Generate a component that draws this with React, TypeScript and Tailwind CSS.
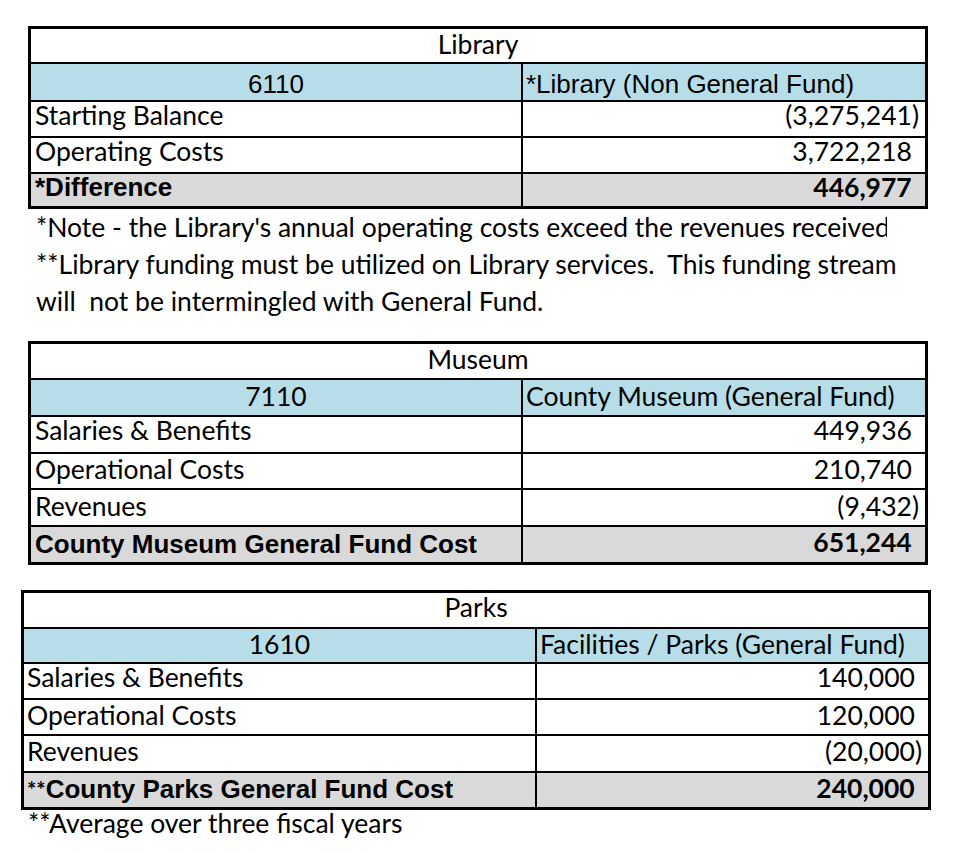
const calibri = "font-['Lato','Noto_Sans',sans-serif] text-[26.5px] leading-none"
const arial = "font-['Liberation_Sans',Arial,sans-serif] text-[26px] leading-none"

type Row = {
  label: string
  value: string
  h: string
  pt: string
}

type Budget = {
  title: string
  titleRow: string
  code: string
  fund: string
  fundFont: string
  fundRow: string
  rows: Row[]
  total: Row & { numPt: string; stars?: boolean }
  width: string
  cols: string
  labelPad: string
}

const library: Budget = {
  title: 'Library',
  titleRow: 'h-[33px] pt-[2px]',
  code: '6110',
  fund: '*Library (Non General Fund)',
  fundFont: arial,
  fundRow: 'h-[36px] pt-[7px]',
  rows: [
    { label: 'Starting Balance', value: '(3,275,241)', h: 'h-[34px]', pt: 'pt-0' },
    { label: 'Operating Costs', value: '3,722,218', h: 'h-[34px]', pt: 'pt-0' },
  ],
  total: { label: '*Difference', value: '446,977', h: 'h-[32px]', pt: 'pt-0', numPt: 'pt-0' },
  width: 'w-[900px] ml-[28px]',
  cols: 'grid-cols-[490px_1fr]',
  labelPad: 'pl-[4px]',
}

const museum: Budget = {
  title: 'Museum',
  titleRow: 'h-[34px] pt-[2px]',
  code: '7110',
  fund: 'County Museum (General Fund)',
  fundFont: calibri,
  fundRow: 'h-[35px] pt-[3px]',
  rows: [
    { label: 'Salaries & Benefits', value: '449,936', h: 'h-[35px]', pt: 'pt-0' },
    { label: 'Operational Costs', value: '210,740', h: 'h-[34px]', pt: 'pt-[2px]' },
    { label: 'Revenues', value: '(9,432)', h: 'h-[35px]', pt: 'pt-[3px]' },
  ],
  total: {
    label: 'County Museum General Fund Cost',
    value: '651,244',
    h: 'h-[35px]',
    pt: 'pt-[4px]',
    numPt: 'pt-[2px]',
  },
  width: 'w-[900px] ml-[28px]',
  cols: 'grid-cols-[490px_1fr]',
  labelPad: 'pl-[4px]',
}

const parks: Budget = {
  title: 'Parks',
  titleRow: 'h-[34px] pt-[1px]',
  code: '1610',
  fund: 'Facilities / Parks (General Fund)',
  fundFont: calibri,
  fundRow: 'h-[33px] pt-[2px]',
  rows: [
    { label: 'Salaries & Benefits', value: '140,000', h: 'h-[34px]', pt: 'pt-0' },
    { label: 'Operational Costs', value: '120,000', h: 'h-[34px]', pt: 'pt-[2px]' },
    { label: 'Revenues', value: '(20,000)', h: 'h-[35px]', pt: 'pt-[2px]' },
  ],
  total: {
    label: 'County Parks General Fund Cost',
    value: '240,000',
    h: 'h-[34px]',
    pt: 'pt-[3px]',
    numPt: 'pt-[2px]',
    stars: true,
  },
  width: 'w-[910px] ml-[21px]',
  cols: 'grid-cols-[511px_1fr]',
  labelPad: 'pl-[3px]',
}

function Amount({ value, bold }: { value: string; bold?: boolean }) {
  const negative = value.startsWith('(')
  return (
    <span className={`${calibri} ${bold ? 'font-bold' : ''}`}>
      {value}
      {/* accounting format keeps room for the closing paren */}
      {!negative && <span className="invisible">)</span>}
    </span>
  )
}

function BudgetTable({ data }: { data: Budget }) {
  return (
    <div className={`${data.width} border-[3px] border-black bg-white text-black`}>
      {/* Title */}
      <div className={`${data.titleRow} text-center ${calibri}`}>{data.title}</div>

      {/* Org / fund */}
      <div className={`grid ${data.cols} border-t-2 border-black bg-[#b7dee8]`}>
        <div className={`${data.fundRow} text-center ${data.fundFont}`}>{data.code}</div>
        <div className={`${data.fundRow} border-l-2 border-black pl-[3px] whitespace-nowrap ${data.fundFont}`}>
          {data.fund}
        </div>
      </div>

      {data.rows.map((row) => (
        <div key={row.label} className={`grid ${data.cols} border-t-2 border-black`}>
          <div className={`${row.h} ${row.pt} ${data.labelPad} whitespace-nowrap ${calibri}`}>{row.label}</div>
          <div className={`${row.h} ${row.pt} border-l-2 border-black pr-[6px] text-right`}>
            <Amount value={row.value} />
          </div>
        </div>
      ))}

      {/* Total */}
      <div className={`grid ${data.cols} border-t-2 border-black bg-[#d9d9d9]`}>
        <div className={`${data.total.h} ${data.total.pt} ${data.labelPad} whitespace-nowrap font-bold ${arial}`}>
          {data.total.stars && (
            <span className="font-['Lato',sans-serif] text-[22px] font-bold">**</span>
          )}
          {data.total.label}
        </div>
        <div className={`${data.total.h} ${data.total.numPt} border-l-2 border-black pr-[6px] text-right`}>
          <Amount value={data.total.value} bold />
        </div>
      </div>
    </div>
  )
}

export default function App() {
  return (
    <div className="h-[853px] w-[956px] overflow-hidden bg-white pt-[26px] text-black">
      <BudgetTable data={library} />

      {/* Notes */}
      <div className={`ml-[36px] whitespace-pre ${calibri} !leading-[37px]`}>
        {/* the sheet cuts the first note off at the cell edge */}
        <div className="w-[851px] overflow-hidden">
          *Note - the Library's annual operating costs exceed the revenues received
        </div>
        <div>**Library funding must be utilized on Library services.  This funding stream</div>
        <div>will  not be intermingled with General Fund.</div>
      </div>

      <div className="mt-[21px]">
        <BudgetTable data={museum} />
      </div>

      <div className="mt-[25px]">
        <BudgetTable data={parks} />
      </div>

      <div className={`ml-[28px] whitespace-pre ${calibri}`}>**Average over three fiscal years</div>
    </div>
  )
}
